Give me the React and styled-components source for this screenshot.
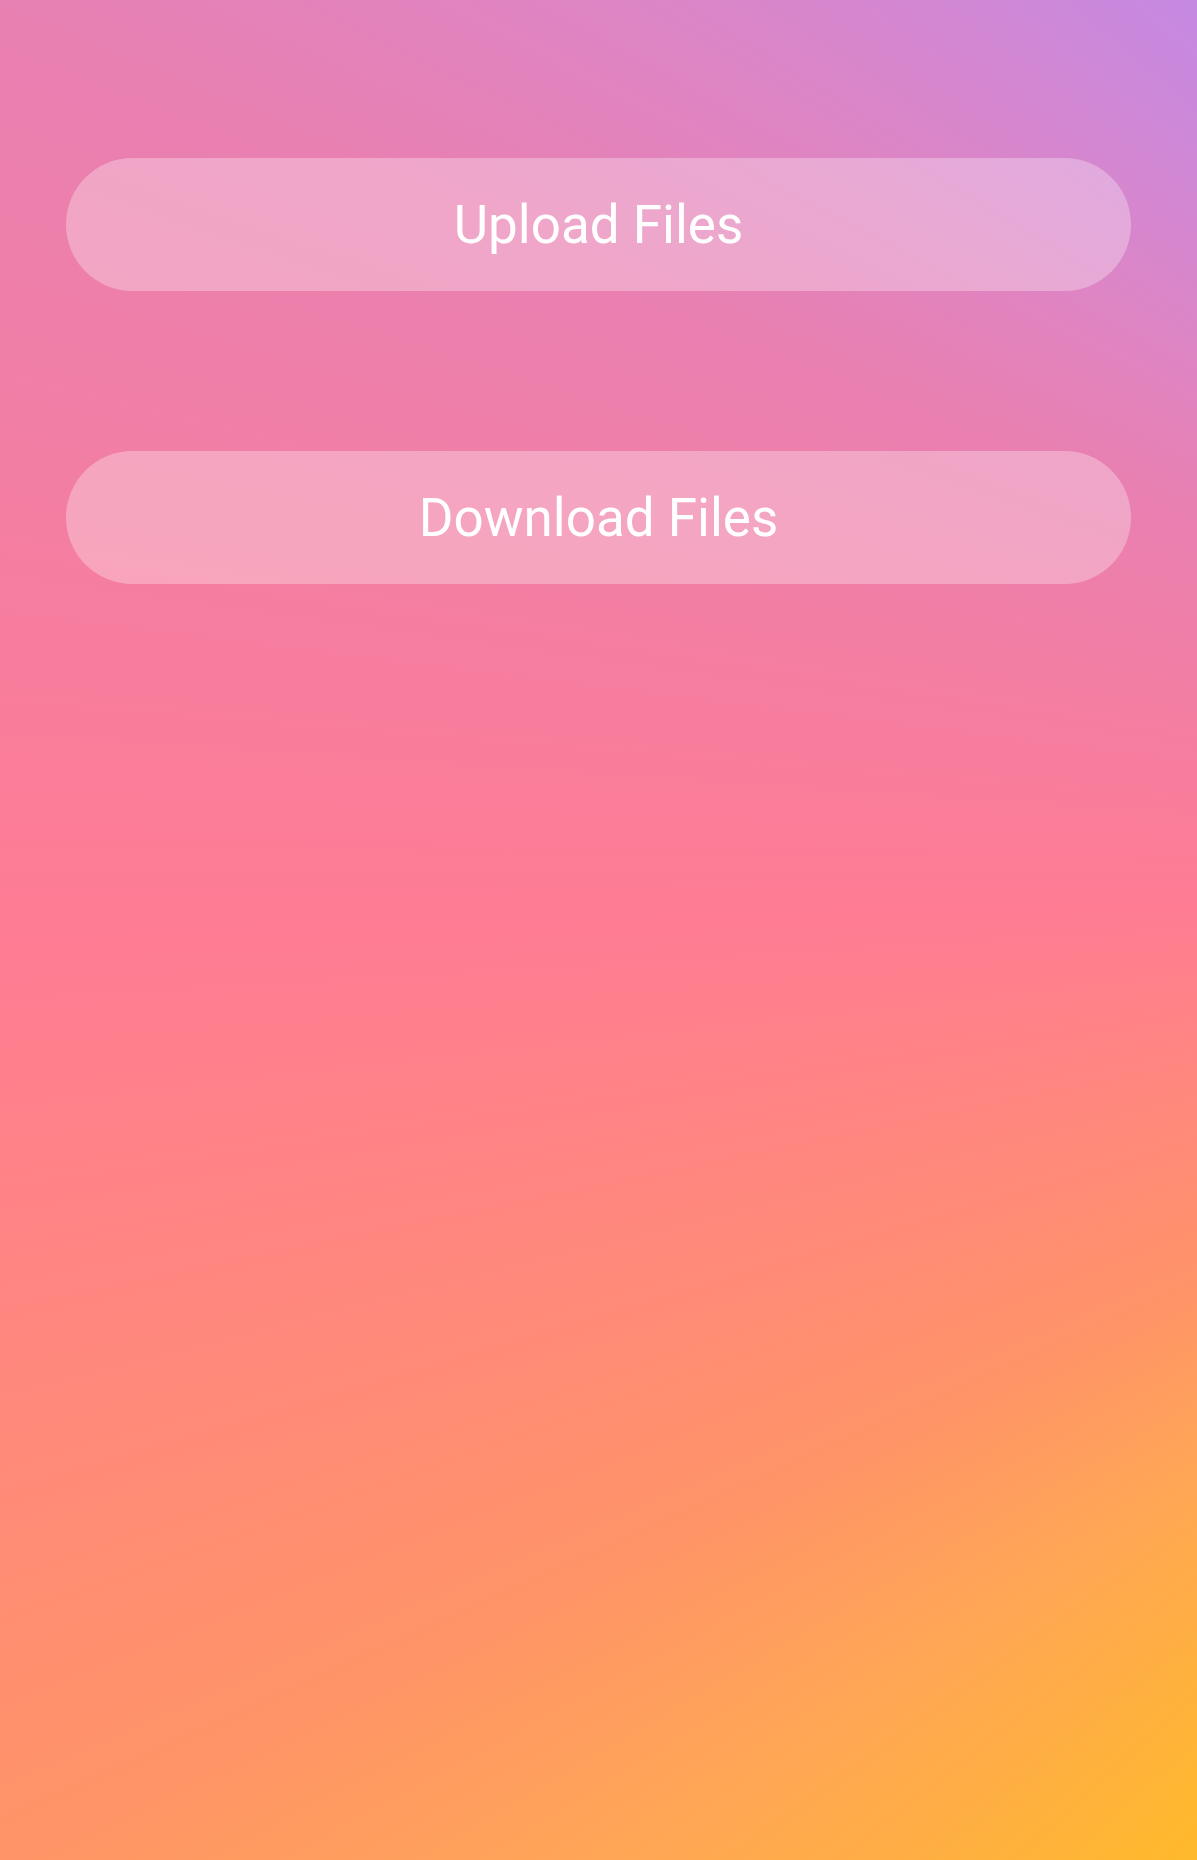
import React from 'react'
import styled, {createGlobalStyle} from 'styled-components';

const GlobalStyle = createGlobalStyle`
    html, body {
        margin: 0;
        padding: 0;
    }
    body {
        font-family: Roboto, "Liberation Sans", sans-serif;
    }
`

const Page = styled.main`
    min-height: 100vh;
    box-sizing: border-box;
    padding: 158px 66px 0;
    display: flex;
    flex-direction: column;
    gap: 160px;
    background: conic-gradient(
        from 0deg at 175% 47%,
        #ffba2a 222deg,
        #ffa656 236.5deg,
        #ff9467 245deg,
        #ff7c93 268deg,
        #e880b2 292.5deg,
        #de85c4 300deg,
        #c589e2 314deg
    );
`

const PillButton = styled.button`
    height: 133px;
    width: 100%;
    border: none;
    border-radius: 67px;
    background: rgba(255, 255, 255, 0.3);
    color: #fff;
    font-family: Roboto, "Liberation Sans", sans-serif;
    font-size: 53px;
    font-weight: 400;
    cursor: pointer;
    transition: background 0.2s;

    &:hover {
        background: rgba(255, 255, 255, 0.4);
    }
`

export default function App() {
    return <>
        <GlobalStyle/>
        <Page>
            <PillButton>Upload Files</PillButton>
            <PillButton>Download Files</PillButton>
        </Page>
    </>
}
